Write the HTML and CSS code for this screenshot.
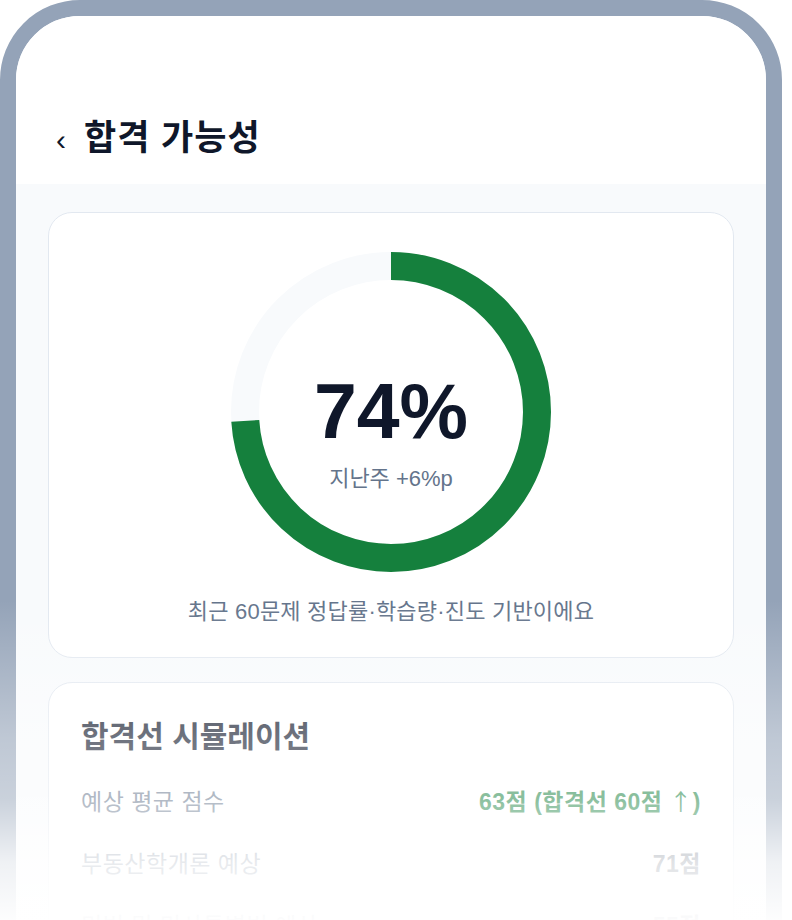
FILE: index.html
```html
<!DOCTYPE html>
<html lang="ko">
    <head>
        <meta charset="utf-8">
        <title>합격 가능성</title>
        <link rel="stylesheet" href="styles.css">
    </head>
    <body>
        <div class="phone">
            <header class="topbar">
                <span class="back">‹</span>
                <h1 class="title">합격 가능성</h1>
            </header>

            <main class="content">
                <!-- 합격 가능성 도넛 -->
                <section class="card card-chance">
                    <div class="donut">
                        <svg width="320" height="320" viewBox="0 0 320 320">
                            <circle cx="160" cy="160" r="146" fill="none" stroke="#f8fafc" stroke-width="28"/>
                            <circle cx="160" cy="160" r="146" fill="none" stroke="#15803d" stroke-width="28"
                                    stroke-dasharray="678.8 917.3" transform="rotate(-90 160 160)"/>
                        </svg>
                        <div class="donut-label">
                            <div class="percent">74%</div>
                            <div class="delta">지난주 +6%p</div>
                        </div>
                    </div>
                    <p class="basis">최근 60문제 정답률·학습량·진도 기반이에요</p>
                </section>

                <!-- 합격선 시뮬레이션 -->
                <section class="card card-sim">
                    <h2 class="sim-title">합격선 시뮬레이션</h2>
                    <div class="row">
                        <span class="row-label">예상 평균 점수</span>
                        <span class="row-value pass">63점 (합격선 60점 <span class="arrow">↑</span>)</span>
                    </div>
                    <div class="row">
                        <span class="row-label">부동산학개론 예상</span>
                        <span class="row-value">71점</span>
                    </div>
                    <div class="row">
                        <span class="row-label">민법 및 민사특별법 예상</span>
                        <span class="row-value">55점</span>
                    </div>
                </section>
            </main>
        </div>
        <div class="fade"></div>
    </body>
</html>
```

FILE: styles.css
```css
body {
    margin: 0;
    background: #ffffff;
    font-family: "Liberation Sans", "Noto Sans CJK SC", sans-serif;
    color: #0f172a;
    overflow: hidden;
    height: 920px;
}

.phone {
    width: 782px;
    height: 1200px;
    box-sizing: border-box;
    border: 16px solid #94a3b8;
    border-radius: 80px;
    overflow: hidden;
    background: #f8fafc;
}

.topbar {
    height: 168px;
    background: #ffffff;
    display: flex;
    align-items: flex-end;
    padding: 0 40px 22px;
    box-sizing: border-box;
    gap: 18px;
}

.back {
    font-size: 30px;
    line-height: 44px;
    color: #0f172a;
}

.title {
    margin: 0;
    font-size: 35px;
    font-weight: 700;
    line-height: 48px;
    letter-spacing: 1px;
}

.content {
    padding: 28px 32px;
    display: flex;
    flex-direction: column;
    gap: 24px;
}

.card {
    background: #ffffff;
    border: 1.5px solid #e2e8f0;
    border-radius: 24px;
}

.card-chance {
    height: 446px;
    box-sizing: border-box;
    padding-top: 39px;
    display: flex;
    flex-direction: column;
    align-items: center;
}

.donut {
    position: relative;
    width: 320px;
    height: 320px;
}

.donut svg {
    display: block;
}

.donut-label {
    position: absolute;
    inset: 0;
    display: flex;
    flex-direction: column;
    align-items: center;
    justify-content: center;
    padding-top: 38px;
}

.percent {
    font-size: 77px;
    font-weight: 700;
    line-height: 80px;
}

.delta {
    font-size: 22px;
    color: #64748b;
    margin-top: 9px;
}

.basis {
    margin: 21px 0 0;
    font-size: 22px;
    letter-spacing: 0.2px;
    color: #64748b;
}

.card-sim {
    padding: 34px 32px;
}

.sim-title {
    margin: 0 0 12px;
    font-size: 30px;
    font-weight: 700;
    line-height: 40px;
    color: #0f172a;
}

.row {
    display: flex;
    justify-content: space-between;
    align-items: center;
    height: 62px;
    font-size: 23px;
    letter-spacing: 0.5px;
}

.row-label {
    color: #64748b;
}

.row-value {
    font-weight: 700;
    color: #334155;
}

.row-value.pass {
    color: #15803d;
}

.arrow {
    font-family: "Noto Sans CJK SC", sans-serif;
    font-weight: 400;
}

.fade {
    position: absolute;
    left: 0;
    right: 0;
    top: 600px;
    height: 320px;
    background: linear-gradient(to bottom, rgba(255, 255, 255, 0), rgba(255, 255, 255, 0.4) 43%, rgba(255, 255, 255, 0.5) 62%, rgba(255, 255, 255, 0.85) 82%, rgba(255, 255, 255, 0.98));
    pointer-events: none;
}
```
